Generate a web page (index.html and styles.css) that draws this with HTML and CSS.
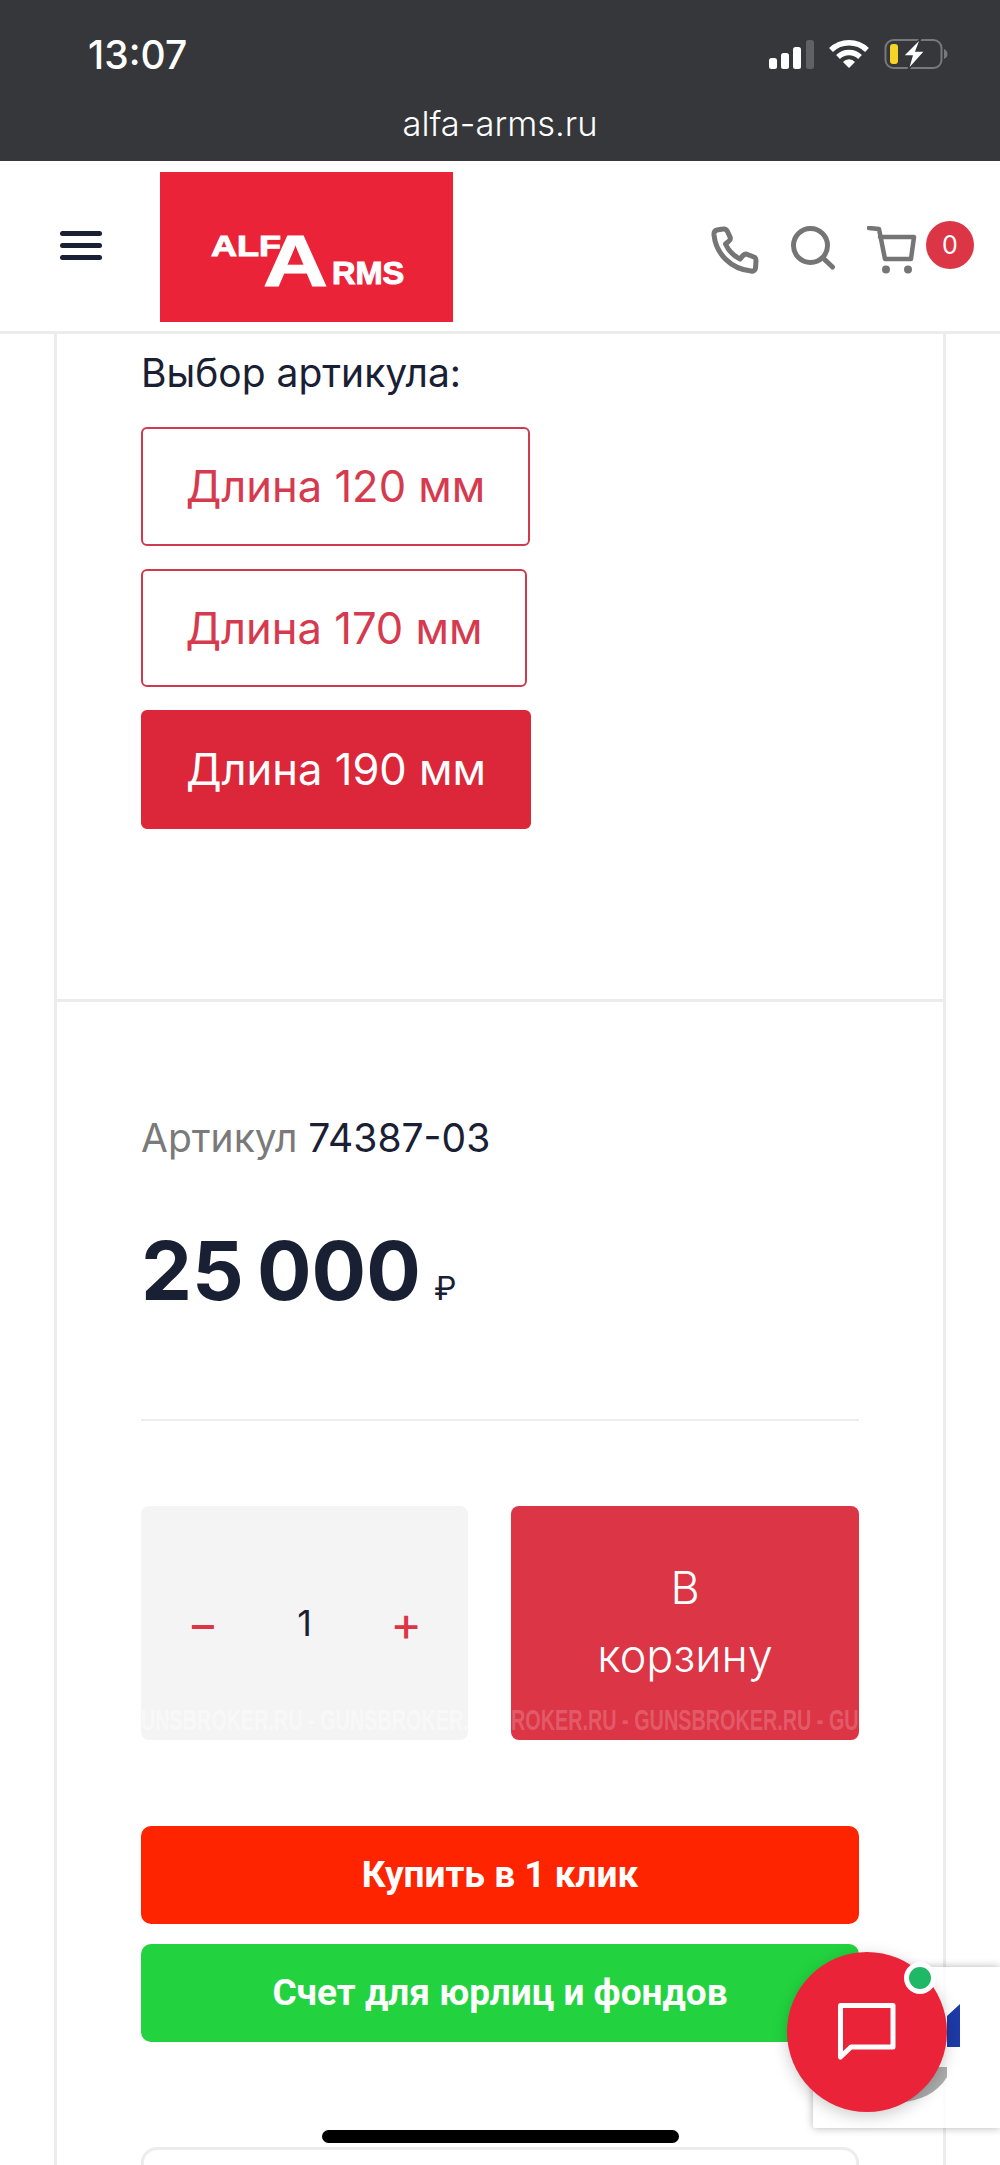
FILE: index.html
```html
<!DOCTYPE html>
<html lang="ru">
<head>
    <meta charset="UTF-8">
    <meta name="viewport" content="width=device-width, initial-scale=1.0">
    <title>alfa-arms.ru</title>
    <link rel="stylesheet" href="styles.css">
</head>
<body>

<div class="phone-bar">
    <div class="status-row">
        <span class="time">13:07</span>
        <div class="status-icons">
            <svg width="46" height="29" viewBox="0 0 46 29">
                <rect x="1" y="18" width="8" height="11" rx="2.5" fill="#fff"/>
                <rect x="13" y="13" width="8" height="16" rx="2.5" fill="#fff"/>
                <rect x="25" y="7" width="8" height="22" rx="2.5" fill="#fff"/>
                <rect x="38" y="0" width="8" height="29" rx="2.5" fill="#5f6164"/>
            </svg>
            <svg width="40" height="30" viewBox="0 0 40 30">
                <path d="M2 11 A26 26 0 0 1 38 11" fill="none" stroke="#fff" stroke-width="5.5"/>
                <path d="M9 18 A16 16 0 0 1 31 18" fill="none" stroke="#fff" stroke-width="5.5"/>
                <path d="M14 23 A8 8 0 0 1 26 23 L20 29 Z" fill="#fff"/>
            </svg>
            <svg width="64" height="32" viewBox="0 0 64 32">
                <rect x="1.500" y="2" width="56" height="28" rx="8" fill="none" stroke="#77797b" stroke-width="2"/>
                <rect x="6" y="6" width="8" height="20" rx="3" fill="#f5d327"/>
                <path d="M60 11 C62.500 12 63.500 14 63.500 16 C63.500 18 62.500 20 60 21 Z" fill="#77797b"/>
                <path d="M37 0 L19 18 L28 18 L24 32 L41 13 L32 13 Z" fill="#fff" stroke="#35373a" stroke-width="1.500"/>
            </svg>
        </div>
    </div>
    <div class="url">alfa-arms.ru</div>
</div>

<header class="site-header">
    <button class="burger" aria-label="Меню">
        <span></span><span></span><span></span>
    </button>
    <a class="logo" href="#">
        <span class="logo-top">ALF</span><span class="logo-big">A</span><span class="logo-bottom">RMS</span>
    </a>
    <div class="header-icons">
        <svg width="48" height="48" viewBox="0 0 48 48" fill="none" stroke="#757575" stroke-width="5" stroke-linejoin="round" stroke-linecap="round">
            <path d="M6 4 L12 3 C14.500 2.500 15.500 3.500 16.500 5.500 L19 11 C19.800 13 19 14.500 17.500 15.500 L14.500 18 C17.500 25 22 29.500 29 33 L32 29.500 C33.500 28 34.500 27.500 36.500 28.500 L43 31 C44.500 31.500 45 33 45 35 L44.500 42 C44 45 42 45.500 40 45 C20 43 5 28 3 9 C2.800 6 3.500 4.500 6 4 Z"/>
        </svg>
        <svg width="44" height="44" viewBox="0 0 44 44" fill="none" stroke="#757575" stroke-width="5" stroke-linecap="round">
            <circle cx="19.500" cy="19.500" r="17"/>
            <path d="M32 32 L41.500 41"/>
        </svg>
        <div class="cart">
            <svg width="50" height="50" viewBox="0 0 50 50" fill="none" stroke="#757575" stroke-width="4.500" stroke-linejoin="round" stroke-linecap="round">
                <path d="M2 2 L12 3 L18 33 L44 33 L47 11 L13 11"/>
                <circle cx="19" cy="43.500" r="2.500" fill="#757575" stroke-width="3"/>
                <circle cx="41" cy="43.500" r="2.500" fill="#757575" stroke-width="3"/>
            </svg>
            <span class="cart-count">0</span>
        </div>
    </div>
</header>

<main class="product">
    <section class="variants">
        <div class="variants-title">Выбор артикула:</div>
        <a class="variant variant-first" href="#">Длина 120 мм</a>
        <a class="variant variant-second" href="#">Длина 170 мм</a>
        <a class="variant variant-active" href="#">Длина 190 мм</a>
    </section>

    <section class="buy">
        <div class="sku"><span class="sku-label">Артикул</span> 74387-03</div>
        <div class="price">25 000 <span class="currency">₽</span></div>
        <hr class="buy-line">
        <div class="cart-row">
            <div class="qty">
                <span class="qty-btn">−</span>
                <span class="qty-value">1</span>
                <span class="qty-btn">+</span>
                <span class="mark mark-light">UNSBROKER.RU - GUNSBROKER.</span>
            </div>
            <a class="add-cart" href="#">
                В<br>корзину
                <span class="mark">ROKER.RU - GUNSBROKER.RU - GU</span>
            </a>
        </div>
        <a class="wide-btn btn-red" href="#">Купить в 1 клик</a>
        <a class="wide-btn btn-green" href="#">Счет для юрлиц и фондов</a>
        <div class="next-card"></div>
    </section>
</main>

<div class="recaptcha">
    <svg width="187" height="161" viewBox="0 0 187 161">
        <path d="M134 49 L147 37 L147 80 L134 80 Z" fill="#1c3aa9"/>
        <path d="M85 136 C108 134 124 126 134 110 L134 100 L110 100 L85 120 Z" fill="#adadad"/>
    </svg>
</div>

<button class="chat" aria-label="Чат">
    <svg width="60" height="60" viewBox="0 0 60 60" fill="none" stroke="#fff" stroke-width="5">
        <path d="M3.500 3.500 L56 3.500 L56 45 L14 45 L3.500 55 Z" stroke-linejoin="round"/>
    </svg>
    <span class="chat-dot"></span>
</button>

<div class="home-bar"></div>

</body>
</html>
```

FILE: styles.css
```css
html, body {
    margin: 0;
    padding: 0;
}
body {
    width: 1000px;
    height: 2165px;
    overflow: hidden;
    position: relative;
    background: #fff;
    font-family: Inter, "Liberation Sans", sans-serif;
    color: #1a2033;
}
a {
    text-decoration: none;
}

/* phone status bar */
.phone-bar {
    height: 161px;
    background: #35373a;
    color: #fff;
    box-sizing: border-box;
    padding-top: 33px;
}
.status-row {
    display: flex;
    justify-content: space-between;
    align-items: center;
    padding: 0 52px 0 88px;
    height: 42px;
}
.time {
    font-size: 39px;
    font-weight: 500;
}
.status-icons {
    display: flex;
    align-items: center;
    gap: 15px;
}
.url {
    text-align: center;
    font-size: 34.500px;
    line-height: 40px;
    margin-top: 29px;
    font-weight: 300;
}

/* site header */
.site-header {
    height: 170px;
    border-bottom: 3px solid #ececec;
    display: flex;
    align-items: flex-start;
    position: relative;
}
.burger {
    border: none;
    background: none;
    padding: 0;
    margin: 70px 0 0 60px;
    width: 42px;
    display: flex;
    flex-direction: column;
    gap: 7px;
}
.burger span {
    display: block;
    height: 5px;
    border-radius: 3px;
    background: #1a2033;
}
.logo {
    display: block;
    width: 293px;
    height: 150px;
    margin: 11px 0 0 58px;
    background: #eb2339;
    color: #fff;
    position: relative;
    font-family: "Liberation Sans", sans-serif;
    font-weight: 700;
    overflow: hidden;
    -webkit-text-stroke: 1px #fff;
}
.logo span {
    position: absolute;
    line-height: 1;
    transform-origin: left top;
}
.logo-top {
    left: 51px;
    top: 59px;
    font-size: 30px;
    transform: scaleX(1.2);
}
.logo-big {
    left: 103px;
    top: 53px;
    font-size: 72px;
    transform: scaleX(1.25);
}
.logo-bottom {
    left: 172px;
    top: 86px;
    font-size: 31px;
    transform: scaleX(1.05);
}
.header-icons {
    margin-left: auto;
    display: flex;
    align-items: flex-start;
    padding: 65px 26px 0 0;
    gap: 32px;
}
.cart {
    display: flex;
    align-items: flex-start;
    gap: 9px;
}
.cart-count {
    width: 48px;
    height: 48px;
    border-radius: 50%;
    background: #dc3545;
    color: #fff;
    font-size: 25px;
    line-height: 48px;
    text-align: center;
    margin-top: -5px;
}

/* product card */
.product {
    margin: 0 54px 0 54px;
    border-left: 3px solid #ececec;
    border-right: 3px solid #ececec;
}
.variants {
    height: 668px;
    box-sizing: border-box;
    padding: 16px 0 0 84px;
    border-bottom: 3px solid #ececec;
}
.variants-title {
    font-size: 39px;
    line-height: 46px;
    margin-bottom: 31px;
}
.variant {
    display: block;
    box-sizing: border-box;
    height: 119px;
    line-height: 114px;
    border: 2.500px solid #d03a4e;
    border-radius: 6px;
    text-align: center;
    font-size: 43.500px;
    color: #d63a4e;
    margin-bottom: 23px;
}
.variant-first {
    width: 389px;
}
.variant-second {
    width: 386px;
    height: 118px;
}
.variant-active {
    width: 390px;
    background: #dc2639;
    border-color: #dc2639;
    color: #fff;
}

/* price and buttons */
.buy {
    padding: 113px 84px 0 84px;
}
.sku {
    font-size: 39px;
    line-height: 46px;
}
.sku-label {
    color: #7a7a7a;
}
.price {
    font-size: 81px;
    font-weight: 700;
    line-height: 100px;
    margin-top: 60px;
    word-spacing: -6px;
}
.currency {
    font-size: 32px;
    font-weight: 400;
}
.buy-line {
    border: none;
    border-top: 2px solid #ececec;
    margin: 80px 0 0 0;
}
.cart-row {
    display: flex;
    justify-content: space-between;
    margin-top: 85px;
}
.qty {
    width: 327px;
    height: 234px;
    background: #f4f4f5;
    border-radius: 8px;
    display: flex;
    align-items: center;
    justify-content: space-between;
    box-sizing: border-box;
    padding: 0 46px;
    position: relative;
    overflow: hidden;
}
.qty-btn {
    color: #dc3545;
    font-size: 48px;
    font-weight: 400;
}
.qty-value {
    font-size: 36px;
}
.add-cart {
    display: block;
    width: 348px;
    height: 234px;
    box-sizing: border-box;
    padding-top: 48px;
    background: #dc3545;
    border-radius: 8px;
    color: #fff;
    font-size: 45px;
    line-height: 68px;
    font-weight: 300;
    text-align: center;
    position: relative;
    overflow: hidden;
}
.mark {
    position: absolute;
    left: 0;
    bottom: 4px;
    white-space: nowrap;
    font-family: "Liberation Sans", sans-serif;
    font-weight: 700;
    font-size: 30px;
    line-height: 32px;
    color: rgba(255, 255, 255, 0.2);
    transform: scaleX(0.66);
    transform-origin: left center;
}
.mark-light {
    color: rgba(255, 255, 255, 0.4);
}
.wide-btn {
    display: block;
    height: 98px;
    line-height: 98px;
    border-radius: 10px;
    text-align: center;
    color: #fff;
    font-family: Roboto, sans-serif;
    font-size: 37px;
    font-weight: 700;
}
.btn-red {
    background: #ff2400;
    margin-top: 86px;
}
.btn-green {
    background: #22d33f;
    margin-top: 20px;
    position: relative;
    z-index: 1;
}
.next-card {
    height: 60px;
    margin-top: 105px;
    border: 3px solid #ececec;
    border-radius: 16px;
}

/* things floating over the page */
.recaptcha {
    position: absolute;
    left: 813px;
    top: 1967px;
    width: 187px;
    height: 161px;
    background: rgba(255, 255, 255, 0.85);
    border-radius: 3px 0 0 3px;
    box-shadow: 0 0 8px rgba(0, 0, 0, 0.3);
}
.recaptcha svg {
    display: block;
}
.chat {
    position: absolute;
    z-index: 2;
    left: 787px;
    top: 1952px;
    width: 160px;
    height: 160px;
    border: none;
    padding: 0;
    border-radius: 50%;
    background: #eb2339;
    box-shadow: 0 4px 16px rgba(0, 0, 0, 0.2);
    display: flex;
    align-items: center;
    justify-content: center;
}
.chat-dot {
    position: absolute;
    right: 11px;
    top: 10px;
    width: 22px;
    height: 22px;
    border: 5px solid #fff;
    border-radius: 50%;
    background: #1fb866;
}
.home-bar {
    position: absolute;
    z-index: 3;
    left: 322px;
    top: 2130px;
    width: 357px;
    height: 13px;
    border-radius: 7px;
    background: #000;
}
```
